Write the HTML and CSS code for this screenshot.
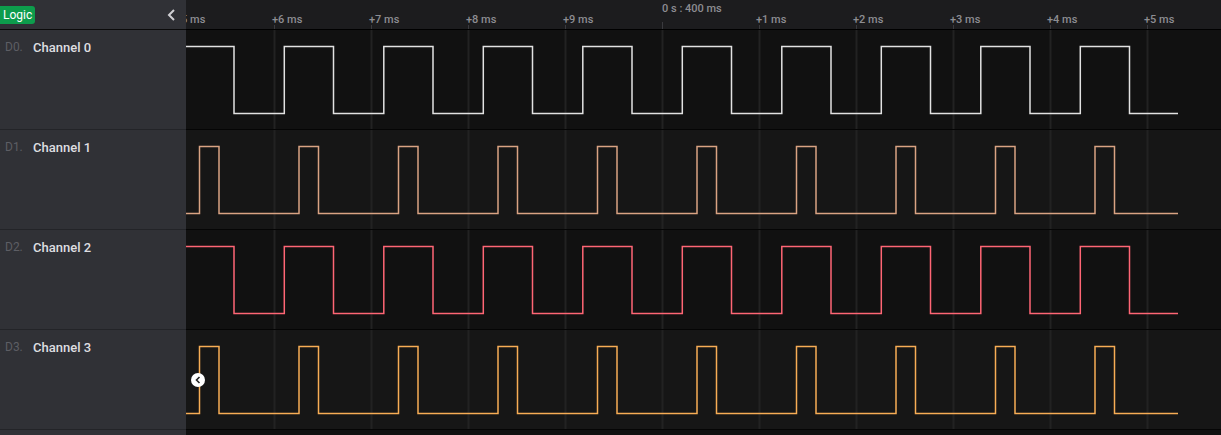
FILE: index.html
```html
<!DOCTYPE html>
<html><head>
	<title>Logic Analyzer</title>
	<link rel="stylesheet" href="styles.css">
</head>
<body>
<div class="app">
	<div class="row head">
		<div class="side side-head">
			<span class="badge">Logic</span>
			<svg class="collapse" width="10" height="12" viewBox="0 0 10 12"><polyline points="7,1 2,6 7,11" /></svg>
		</div>
		<div class="ruler">
			<svg class="ruler-svg" width="1035" height="29">
				<text x="-11" y="23">+5 ms</text>
				<text x="86" y="23">+6 ms</text>
				<text x="183" y="23">+7 ms</text>
				<text x="280" y="23">+8 ms</text>
				<text x="377" y="23">+9 ms</text>
				<text x="476" y="12">0 s : 400 ms</text>
				<text x="570" y="23">+1 ms</text>
				<text x="667" y="23">+2 ms</text>
				<text x="764" y="23">+3 ms</text>
				<text x="861" y="23">+4 ms</text>
				<text x="958" y="23">+5 ms</text>
				<g class="ticks">
					<line x1="88.5" y1="25" x2="88.5" y2="29" />
					<line x1="185.5" y1="25" x2="185.5" y2="29" />
					<line x1="282.5" y1="25" x2="282.5" y2="29" />
					<line x1="379.5" y1="25" x2="379.5" y2="29" />
					<line class="major" x1="476.5" y1="22" x2="476.5" y2="29" />
					<line x1="573.5" y1="25" x2="573.5" y2="29" />
					<line x1="670.5" y1="25" x2="670.5" y2="29" />
					<line x1="767.5" y1="25" x2="767.5" y2="29" />
					<line x1="864.5" y1="25" x2="864.5" y2="29" />
					<line x1="961.5" y1="25" x2="961.5" y2="29" />
				</g>
			</svg>
		</div>
	</div>

	<div class="row">
		<div class="side"><span class="idx">D0.</span><span class="name">Channel 0</span></div>
		<div class="wave even">
			<svg width="1035" height="99">
				<g class="grid"><line x1="88.5" y1="0" x2="88.5" y2="99"/><line x1="185.5" y1="0" x2="185.5" y2="99"/><line x1="282.5" y1="0" x2="282.5" y2="99"/><line x1="379.5" y1="0" x2="379.5" y2="99"/><line x1="476.5" y1="0" x2="476.5" y2="99"/><line x1="573.5" y1="0" x2="573.5" y2="99"/><line x1="670.5" y1="0" x2="670.5" y2="99"/><line x1="767.5" y1="0" x2="767.5" y2="99"/><line x1="864.5" y1="0" x2="864.5" y2="99"/><line x1="961.5" y1="0" x2="961.5" y2="99"/></g>
				<path class="sig sig-0" d="M0 16.5 H48 V83.5 H98.3 V16.5 H147.5 V83.5 H197.8 V16.5 H247 V83.5 H297.3 V16.5 H346.5 V83.5 H396.8 V16.5 H446 V83.5 H496.3 V16.5 H545.5 V83.5 H595.8 V16.5 H645 V83.5 H695.3 V16.5 H744.5 V83.5 H794.8 V16.5 H844 V83.5 H894.3 V16.5 H943.5 V83.5 H992" />
			</svg>
		</div>
	</div>

	<div class="row">
		<div class="side"><span class="idx">D1.</span><span class="name">Channel 1</span></div>
		<div class="wave odd">
			<svg width="1035" height="99">
				<g class="grid"><line x1="88.5" y1="0" x2="88.5" y2="99"/><line x1="185.5" y1="0" x2="185.5" y2="99"/><line x1="282.5" y1="0" x2="282.5" y2="99"/><line x1="379.5" y1="0" x2="379.5" y2="99"/><line x1="476.5" y1="0" x2="476.5" y2="99"/><line x1="573.5" y1="0" x2="573.5" y2="99"/><line x1="670.5" y1="0" x2="670.5" y2="99"/><line x1="767.5" y1="0" x2="767.5" y2="99"/><line x1="864.5" y1="0" x2="864.5" y2="99"/><line x1="961.5" y1="0" x2="961.5" y2="99"/></g>
				<path class="sig sig-1" d="M0 83.5 H13.5 V16.5 H33 V83.5 H113 V16.5 H132.5 V83.5 H212.5 V16.5 H232 V83.5 H312 V16.5 H331.5 V83.5 H411.5 V16.5 H431 V83.5 H511 V16.5 H530.5 V83.5 H610.5 V16.5 H630 V83.5 H710 V16.5 H729.5 V83.5 H809.5 V16.5 H829 V83.5 H909 V16.5 H928.5 V83.5 H992" />
			</svg>
		</div>
	</div>

	<div class="row">
		<div class="side"><span class="idx">D2.</span><span class="name">Channel 2</span></div>
		<div class="wave even">
			<svg width="1035" height="99">
				<g class="grid"><line x1="88.5" y1="0" x2="88.5" y2="99"/><line x1="185.5" y1="0" x2="185.5" y2="99"/><line x1="282.5" y1="0" x2="282.5" y2="99"/><line x1="379.5" y1="0" x2="379.5" y2="99"/><line x1="476.5" y1="0" x2="476.5" y2="99"/><line x1="573.5" y1="0" x2="573.5" y2="99"/><line x1="670.5" y1="0" x2="670.5" y2="99"/><line x1="767.5" y1="0" x2="767.5" y2="99"/><line x1="864.5" y1="0" x2="864.5" y2="99"/><line x1="961.5" y1="0" x2="961.5" y2="99"/></g>
				<path class="sig sig-2" d="M0 16.5 H48 V83.5 H98.3 V16.5 H147.5 V83.5 H197.8 V16.5 H247 V83.5 H297.3 V16.5 H346.5 V83.5 H396.8 V16.5 H446 V83.5 H496.3 V16.5 H545.5 V83.5 H595.8 V16.5 H645 V83.5 H695.3 V16.5 H744.5 V83.5 H794.8 V16.5 H844 V83.5 H894.3 V16.5 H943.5 V83.5 H992" />
			</svg>
		</div>
	</div>

	<div class="row">
		<div class="side"><span class="idx">D3.</span><span class="name">Channel 3</span></div>
		<div class="wave odd">
			<svg width="1035" height="99">
				<g class="grid"><line x1="88.5" y1="0" x2="88.5" y2="99"/><line x1="185.5" y1="0" x2="185.5" y2="99"/><line x1="282.5" y1="0" x2="282.5" y2="99"/><line x1="379.5" y1="0" x2="379.5" y2="99"/><line x1="476.5" y1="0" x2="476.5" y2="99"/><line x1="573.5" y1="0" x2="573.5" y2="99"/><line x1="670.5" y1="0" x2="670.5" y2="99"/><line x1="767.5" y1="0" x2="767.5" y2="99"/><line x1="864.5" y1="0" x2="864.5" y2="99"/><line x1="961.5" y1="0" x2="961.5" y2="99"/></g>
				<path class="sig sig-3" d="M0 83.5 H13.5 V16.5 H33 V83.5 H113 V16.5 H132.5 V83.5 H212.5 V16.5 H232 V83.5 H312 V16.5 H331.5 V83.5 H411.5 V16.5 H431 V83.5 H511 V16.5 H530.5 V83.5 H610.5 V16.5 H630 V83.5 H710 V16.5 H729.5 V83.5 H809.5 V16.5 H829 V83.5 H909 V16.5 H928.5 V83.5 H992" />
			</svg>
			<span class="nav-btn"><svg width="6" height="8" viewBox="0 0 6 8"><polyline points="4.5,1 1.5,4 4.5,7" /></svg></span>
		</div>
	</div>

	<div class="row tail">
		<div class="side"></div>
		<div class="wave even"></div>
	</div>
</div>
</body>
</html>
```

FILE: styles.css
```css
body {
	margin: 0;
	background-color: #111111;
	font-family: Roboto, "Liberation Sans", sans-serif;
	overflow: hidden;
}
.app {
	display: flex;
	flex-direction: column;
	height: 435px;
}
.row {
	display: flex;
	height: 100px;
	flex: none;
}
.row.head {
	height: 30px;
}
.row.tail {
	flex: 1;
	height: auto;
}
.side {
	width: 186px;
	flex: none;
	background-color: #303136;
	border-bottom: 1px solid #232428;
	display: flex;
	align-items: flex-start;
	padding-top: 10px;
	box-sizing: border-box;
}
.side-head {
	border-bottom: 1px solid #0a0a0a;
	align-items: center;
	justify-content: space-between;
	padding: 0 9px 0 0;
}
.badge {
	background-color: #0d9c4c;
	color: #ffffff;
	font-size: 12px;
	line-height: 18px;
	padding: 0 3px 0 3px;
	border-radius: 0 3px 3px 0;
	margin-top: 1px;
}
.collapse polyline {
	fill: none;
	stroke: #d0d0d4;
	stroke-width: 2;
}
.idx {
	color: #5d5e64;
	font-size: 12px;
	width: 28px;
	padding-left: 5px;
	line-height: 15px;
}
.name {
	color: #dedee0;
	font-size: 13px;
	font-weight: 500;
	line-height: 15px;
}
.ruler {
	flex: 1;
	background-color: #1c1c1e;
	border-bottom: 1px solid #000000;
	overflow: hidden;
}
.ruler-svg {
	display: block;
}
.ruler-svg text {
	font-family: Roboto, "Liberation Sans", sans-serif;
	font-size: 11px;
	font-weight: 500;
	fill: #8d8d92;
}
.ticks line {
	stroke: #3a3a3e;
	stroke-width: 1;
}
.wave {
	flex: 1;
	position: relative;
	border-bottom: 1px solid #050505;
	overflow: hidden;
}
.wave svg {
	display: block;
}
.wave.even {
	background-color: #111111;
}
.wave.odd {
	background-color: #161616;
}
.grid line {
	stroke: #222222;
	stroke-width: 2;
}
.sig {
	fill: none;
	stroke-width: 1.5;
}
.sig-0 {
	stroke: #e2e2e2;
}
.sig-1 {
	stroke: #d9a383;
}
.sig-2 {
	stroke: #ff6675;
}
.sig-3 {
	stroke: #f7ad55;
}
.nav-btn {
	position: absolute;
	left: 5px;
	top: 43px;
	width: 14px;
	height: 14px;
	border-radius: 50%;
	background-color: #ffffff;
	display: flex;
	align-items: center;
	justify-content: center;
}
.nav-btn polyline {
	fill: none;
	stroke: #222222;
	stroke-width: 1.6;
}
```
